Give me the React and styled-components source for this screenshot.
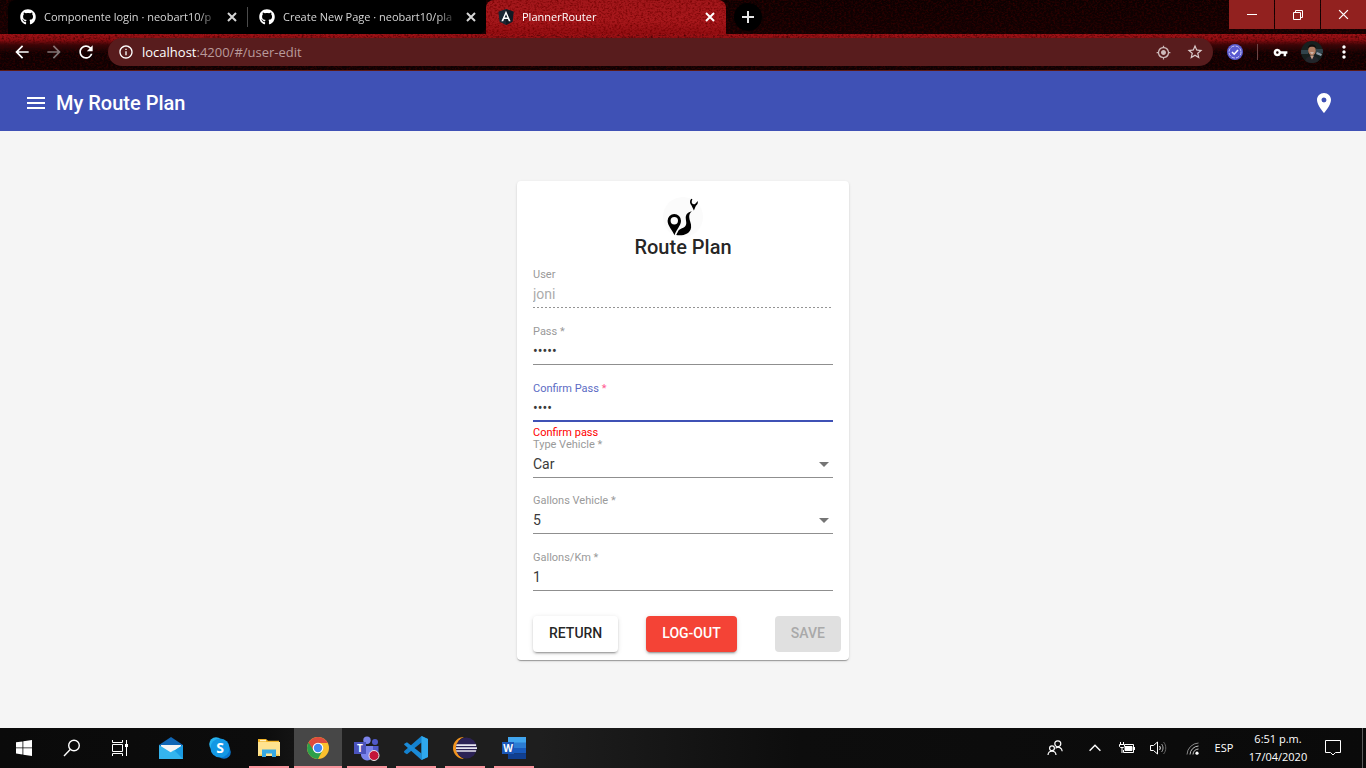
import React, { useState } from "react";
import styled, { createGlobalStyle, css } from "styled-components";
import {
  MdArrowBack, MdArrowForward, MdRefresh, MdInfoOutline, MdMyLocation,
  MdStarBorder, MdVpnKey, MdMoreVert, MdMenu, MdPlace,
} from "react-icons/md";
import { FaGithub } from "react-icons/fa";

const systemFont = `"Open Sans", "Noto Sans", sans-serif`;
const appFont = `Roboto, "Liberation Sans", sans-serif`;

const GlobalStyle = createGlobalStyle`
  *, *::before, *::after { box-sizing: border-box; }
  body { margin: 0; background: #f5f5f5; }
  button, input, select { font: inherit; color: inherit; margin: 0; }
  svg { display: block; flex: none; }
`;

const Screen = styled.div`
  min-height: 100vh;
  display: flex;
  flex-direction: column;
`;

const plainButton = css`
  border: 0;
  padding: 0;
  background: none;
  display: flex;
  align-items: center;
  justify-content: center;
  flex: none;
`;

/* ---------- browser window ---------- */

const BrowserFrame = styled.header`
  position: relative;
  isolation: isolate;
  font-family: ${systemFont};
  color: #fff;
  background: linear-gradient(#0c0101 0, #120102 34px, #a01216 34px, #8c0d11 40px, #3a0507 45px, #0e0102 53px, #0e0102 100%);
  border-bottom: 1px solid #5c1a15;
`;

const GrainSvg = styled.svg`
  position: absolute;
  inset: 0;
  width: 100%;
  height: 100%;
  z-index: -1;
`;

const TabStrip = styled.div`
  display: flex;
  height: 34px;
  padding-left: 8px;
`;

const Tab = styled.div`
  position: relative;
  isolation: isolate;
  overflow: hidden;
  flex: 0 1 ${(p) => (p.$active ? 240 : 239)}px;
  min-width: 0;
  display: flex;
  align-items: center;
  padding: 0 ${(p) => (p.$active ? 8 : 7)}px 0 12px;
  color: ${(p) => (p.$active ? "#fff" : "#d6d6d6")};
  background: ${(p) => (p.$active ? "linear-gradient(#a2171b, #a8181c 60%, #940e12)" : "#000")};
  border-radius: ${(p) => (p.$active ? "8px 8px 0 0" : p.$last ? "0 0 8px 0" : "8px 0 0 0")};
`;

const TabDivider = styled.span`
  width: 1px;
  height: 20px;
  margin: 7px -1px 0 0;
  background: #4b4b4b;
  z-index: 1;
`;

const TabTitle = styled.span`
  flex: 1;
  min-width: 0;
  margin: 0 6px 0 8px;
  overflow: hidden;
  white-space: nowrap;
  font-size: 11px;
  line-height: 16px;
  mask-image: linear-gradient(to right, #000 calc(100% - 20px), transparent);
`;

const TabClose = styled.button`
  ${plainButton}
  width: 16px;
  height: 16px;
`;

const NewTab = styled.button`
  ${plainButton}
  width: 28px;
  height: 28px;
  margin: 3px 0 0 8px;
  border-radius: 50%;
  background: #000;
`;

const WindowControls = styled.div`
  margin-left: auto;
  display: flex;
  gap: 1px;
  height: 29px;
`;

const WindowButton = styled.button`
  ${plainButton}
  width: 45px;
  background: #92211f;
`;

const Toolbar = styled.div`
  display: flex;
  align-items: center;
  height: 36px;
  padding: 0 6px;
`;

const ToolButton = styled.button`
  ${plainButton}
  width: 32px;
  height: 32px;
  opacity: ${(p) => (p.disabled ? 0.45 : 1)};
  color: #fff;
`;

const AddressBar = styled.div`
  flex: 1;
  min-width: 0;
  display: flex;
  align-items: center;
  height: 28px;
  margin: 0 6px;
  padding: 0 2px 0 10px;
  border-radius: 14px;
  background: #581c1d;
`;

const Address = styled.span`
  flex: 1;
  min-width: 0;
  padding-left: 8px;
  overflow: hidden;
  white-space: nowrap;
  font-size: 13px;
  line-height: 20px;
  color: #b89a9b;
  b { font-weight: 400; color: #fff; }
`;

const ToolDivider = styled.span`
  width: 1px;
  height: 16px;
  margin: 0 6px;
  background: #6b4545;
`;

/* ---------- application ---------- */

const AppBar = styled.div`
  display: flex;
  align-items: center;
  height: 60px;
  padding: 4px 30px 0 24px;
  background: #3f51b5;
  color: #fff;
  font-family: ${appFont};
`;

const AppTitle = styled.h1`
  flex: 1;
  margin: 0 0 0 8px;
  font-size: 20px;
  line-height: 32px;
  font-weight: 500;
`;

const IconButton = styled.button`
  ${plainButton}
  width: 24px;
  height: 24px;
`;

const Page = styled.main`
  flex: 1;
  padding: 50px 16px;
  background: #f5f5f5;
  font-family: ${appFont};
  color: rgba(0, 0, 0, 0.87);
`;

const Card = styled.form`
  width: 332px;
  max-width: 100%;
  margin: 0 auto;
  padding: 16px 16px 8px;
  border-radius: 4px;
  background: #fff;
  box-shadow: 0 2px 1px -1px rgba(0, 0, 0, 0.2), 0 1px 1px rgba(0, 0, 0, 0.14), 0 1px 3px rgba(0, 0, 0, 0.12);
`;

const Brand = styled.div`
  display: flex;
  flex-direction: column;
  align-items: center;
  margin-bottom: 10px;
`;

const BrandName = styled.h2`
  margin: 0;
  font-size: 20px;
  line-height: 20px;
  font-weight: 500;
`;

const FieldBox = styled.div`
  display: flex;
  flex-direction: column;
  padding-top: ${(p) => (p.$select ? 0 : 1)}px;
`;

const FieldLabel = styled.label`
  margin-bottom: 2px;
  font-size: 11px;
  line-height: 14px;
  color: ${(p) => (p.$focused ? "#5c6bc4" : "#9a9a9a")};
  span { color: ${(p) => (p.$focused ? "#ff5a92" : "inherit")}; }
`;

const Control = styled.div`
  position: relative;
  height: 24px;
  border-bottom: ${(p) => (p.$focused ? "2px solid #3f51b5" : "1px solid #8f8f8f")};
  ${(p) => p.$disabled && css`
    border-bottom: 0;
    background: repeating-linear-gradient(to right, #949494 0 2px, transparent 2px 4px) left bottom / 299px 1px no-repeat;
  `}
`;

const controlText = css`
  display: block;
  width: 100%;
  height: 20px;
  padding: 0;
  border: 0;
  outline: 0;
  border-radius: 0;
  background: none;
  font-size: 14px;
  line-height: 20px;
  color: #3a3a3a;
  opacity: 1;
`;

const TextInput = styled.input`
  ${controlText}
  &:disabled { color: #acacac; }
`;

const SelectInput = styled.select`
  ${controlText}
  appearance: none;
`;

const SelectArrow = styled.span`
  position: absolute;
  top: 8px;
  right: 4px;
  border: 5px solid transparent;
  border-top-color: #757575;
  border-bottom: 0;
  pointer-events: none;
`;

const Message = styled.div`
  height: 16px;
  padding-top: 4px;
  font-size: 11px;
  line-height: 14px;
  color: #ff0000;
`;

const Actions = styled.div`
  display: flex;
  margin: 9px -8px 0 0;
`;

const ActionButton = styled.button`
  height: 36px;
  margin-left: ${(p) => p.$space || "0"};
  padding: 0 16px 2px;
  border: 0;
  border-radius: 4px;
  font-size: 14px;
  line-height: 34px;
  font-weight: 500;
  color: ${(p) => (p.$tone === "warn" ? "#fff" : "rgba(0, 0, 0, 0.87)")};
  background: ${(p) => (p.$tone === "warn" ? "#f44336" : "#fff")};
  box-shadow: 0 3px 1px -2px rgba(0, 0, 0, 0.2), 0 2px 2px rgba(0, 0, 0, 0.14), 0 1px 5px rgba(0, 0, 0, 0.12);
  &:disabled {
    color: #a9a9a9;
    background: #e0e0e0;
    box-shadow: none;
  }
`;

/* ---------- desktop task bar ---------- */

const TaskBar = styled.footer`
  display: flex;
  height: 40px;
  background: linear-gradient(to right, #0a0a0a 0, #0c0c0c 260px, #1e1e1e 340px, #1e1e1e 540px, #0d0d0d 800px, #0a0a0a 100%);
  color: #fff;
  font-family: ${systemFont};
`;

const TaskGroup = styled.div`
  display: flex;
  gap: ${(p) => p.$gap || 0}px;
  margin-left: ${(p) => (p.$gap ? 3 : 0)}px;
`;

const TaskButton = styled.button`
  ${plainButton}
  position: relative;
  width: 48px;
  height: 40px;
  background: ${(p) => (p.$active ? "#474747" : "none")};
  &::after {
    content: "";
    display: ${(p) => (p.$open ? "block" : "none")};
    position: absolute;
    bottom: 0;
    left: ${(p) => (p.$active ? 0 : 4)}px;
    right: ${(p) => (p.$active ? 0 : 4)}px;
    height: 2px;
    background: #f9939c;
  }
`;

const Tray = styled.div`
  display: flex;
  margin-left: auto;
`;

const TrayButton = styled.button`
  ${plainButton}
  flex-direction: column;
  width: ${(p) => p.$width}px;
  height: 40px;
  font-size: 11px;
  line-height: 18px;
  white-space: nowrap;
`;

const ShowDesktop = styled.button`
  width: 4px;
  margin-left: 11px;
  padding: 0;
  border: 0;
  border-left: 1px solid #5b5b5b;
  background: none;
`;

/* ---------- drawings ---------- */

function Grain({ id, red, amount }) {
  return (
    <GrainSvg aria-hidden="true">
      <filter id={id} x="0" y="0" width="100%" height="100%" colorInterpolationFilters="sRGB">
        <feTurbulence type="fractalNoise" baseFrequency="0.45 0.6" numOctaves="3" seed="4" />
        <feColorMatrix values={`0 0 0 0 ${red} 0 0 0 0 0 0 0 0 0 0 ${amount} 0 0 0 ${-amount * 0.42}`} />
      </filter>
      <rect width="100%" height="100%" filter={`url(#${id})`} />
    </GrainSvg>
  );
}

const CloseGlyph = ({ size = 10, color = "currentColor", width = 2 }) => (
  <svg width={size} height={size} viewBox="0 0 10 10" stroke={color} strokeWidth={width}>
    <path d="M1 1l8 8M9 1l-8 8" />
  </svg>
);

const AngularMark = () => (
  <svg width="16" height="16" viewBox="0 0 16 16">
    <path d="M8 0l7.6 2.7-1.2 10L8 16l-6.4-3.3-1.2-10z" fill="#1b2733" />
    <path d="M8 0l7.6 2.7-1.2 10L8 16z" fill="#111a24" />
    <path d="M8 1.8L3.4 12.3h1.8l.9-2.4h3.8l.9 2.4h1.8zM8 5.2l1.4 3.3H6.6z" fill="#fff" fillRule="evenodd" />
  </svg>
);

const VerifiedMark = () => (
  <svg width="16" height="16" viewBox="0 0 16 16" fill="none">
    <circle cx="8" cy="8" r="8" fill="#5b5bd0" />
    <circle cx="8" cy="8" r="6" stroke="#c9c9f5" strokeDasharray="3.4 1.3" />
    <path d="M5 8l2.2 2.2L11 6" stroke="#fff" strokeWidth="1.6" />
  </svg>
);

const Avatar = () => (
  <svg width="22" height="22" viewBox="0 0 22 22">
    <clipPath id="face"><circle cx="11" cy="11" r="11" /></clipPath>
    <g clipPath="url(#face)">
      <rect width="22" height="22" fill="#17201f" />
      <path d="M0 9h7v4H0zM15 8h7v4h-7z" fill="#31434b" />
      <path d="M4 22c0-5 3-7 7-7s7 2 7 7z" fill="#22252b" />
      <path d="M16 11l5 2-1 2-5-2z" fill="#8d9aa8" />
      <ellipse cx="11" cy="9.500" rx="3.800" ry="5" fill="#b07c62" />
      <path d="M7 7.500c-.5-5.500 8.500-5.500 8 0-1-2.500-7-2.500-8 0z" fill="#100c0b" />
      <path d="M9.200 11.500h3.600c-.5 1.400-3.100 1.400-3.600 0z" fill="#eee" />
      <path d="M9 14.500h4l-2 4z" fill="#c9a08c" />
    </g>
  </svg>
);

const RouteLogo = () => (
  <svg width="40" height="40" viewBox="0 0 40 40" role="img" aria-label="Route">
    <circle cx="20" cy="20" r="20" fill="#fbfbfb" />
    <path d="M11.300 17a6.700 6.700 0 0 0-6.700 6.700c0 4.800 4 8.300 6.900 14.600C13.600 32 18 28.500 18 23.700A6.700 6.700 0 0 0 11.300 17zm0 3a3.700 3.700 0 1 1 0 7.400 3.700 3.700 0 0 1 0-7.400z" fillRule="evenodd" />
    <path d="M28.800 14.300c-4.200 1-6.400 3.400-6 7.500.3 3.200 1.200 5.200-.6 7.500-1.700 2.200-4.700 1.800-6.700 4.300L13.200 38c6.300 1.200 14-.8 14.900-7.500.5-4-1.900-7.400-1.900-10.500 0-2.300.8-4.200 2.600-5.700z" />
    <path d="M28.200 1.800c-2 2.200-1.300 4.800.3 6.800l2.400 5 2-4.800c1.700-1.300 2.100-2.700 1.900-4.800l-1.800 2c-.7 1-1.400 1.300-2.200 1.200-2-.1-2.700-2.200-1.400-5z" />
  </svg>
);

const WindowsMark = () => (
  <svg width="16" height="16" viewBox="0 0 16 16" fill="#fff">
    <path d="M0 2.300l6.500-.9v6.100H0zM7.300 1.300L16 0v7.500H7.300zM0 8.300h6.500v6.200L0 13.600zM7.300 8.300H16V16l-8.700-1.300z" />
  </svg>
);

const SearchGlyph = () => (
  <svg width="18" height="18" viewBox="0 0 18 18" fill="none" stroke="#fff" strokeWidth="1.400">
    <circle cx="11" cy="6.500" r="5.300" />
    <path d="M7.200 10.500L1 17" />
  </svg>
);

const TaskViewGlyph = () => (
  <svg width="16" height="16" viewBox="0 0 16 16" fill="none" stroke="#fff">
    <path d="M.5 0v2.500h10V0M.5 16v-2.500h10V16M.5 4.500h10v7H.5zM14.500 0v16" />
    <path d="M13 4h3v3h-3z" fill="#fff" stroke="none" />
  </svg>
);

const MailMark = () => (
  <svg width="24" height="22" viewBox="0 0 24 22">
    <path d="M0 8L12 0l12 8v4H0z" fill="#1066b5" />
    <path d="M2 8h20v9H2z" fill="#f4f4f4" />
    <path d="M0 8l12 7.500L24 8v14H0z" fill="#35b4ee" />
    <path d="M0 22l16-8.700L24 8v14z" fill="#1a9be3" />
    <path d="M0 22L15 13l9 9z" fill="#45c5f5" opacity=".6" />
  </svg>
);

const SkypeMark = () => (
  <svg width="22" height="22" viewBox="0 0 22 22">
    <circle cx="7" cy="7" r="6.800" fill="#27b4f0" />
    <circle cx="15" cy="15" r="6.800" fill="#0a78d0" />
    <circle cx="11" cy="11" r="9.600" fill="#1398e4" />
    <text x="11" y="16" textAnchor="middle" fill="#fff" fontFamily="Open Sans, sans-serif" fontWeight="700" fontSize="14">S</text>
  </svg>
);

const FolderMark = () => (
  <svg width="22" height="18" viewBox="0 0 22 18">
    <path d="M0 0h8l2 1.800h11V6H0z" fill="#f3b529" />
    <path d="M0 3h22v14H0z" fill="#ffe38f" />
    <path d="M2 1h6v1.300H2z" fill="#fff3c6" />
    <path d="M4 10.500h14V18h-4v-3.500H8V18H4z" fill="#37a9e3" />
    <path d="M1 15.500h3V17H1zM18 15.500h3V17h-3z" fill="#f6c948" />
  </svg>
);

const ChromeMark = () => (
  <svg width="22" height="22" viewBox="0 0 22 22">
    <circle cx="11" cy="11" r="11" fill="#fbc02d" />
    <path d="M11 11L1.500 5.500A11 11 0 0 0 11 22l4.500-8.500z" fill="#2c9f4b" />
    <path d="M11 11L1.500 5.500a11 11 0 0 1 19-.1V6H11z" fill="#dd4b3e" />
    <path d="M1.500 5.500L6.700 13.600 11 6z" fill="#dd4b3e" />
    <circle cx="11" cy="11" r="5.300" fill="#fff" />
    <circle cx="11" cy="11" r="4.200" fill="#4285f4" />
  </svg>
);

const TeamsMark = () => (
  <svg width="26" height="25" viewBox="0 0 26 25">
    <circle cx="21" cy="6" r="3" fill="#5059c9" />
    <circle cx="13" cy="4.200" r="3.700" fill="#7b83eb" />
    <path d="M16 10h8.500v7a5 5 0 0 1-8.500 3z" fill="#5059c9" />
    <path d="M7 10h12v8a6 6 0 0 1-12 1z" fill="#7b83eb" />
    <path d="M0 6h12v12H0z" fill="#4b53bc" />
    <text x="6" y="16" textAnchor="middle" fill="#fff" fontFamily="Open Sans, sans-serif" fontWeight="700" fontSize="10">T</text>
    <circle cx="20" cy="19.500" r="5" fill="#c4143a" stroke="#e9e9e9" />
  </svg>
);

const CodeMark = () => (
  <svg width="24" height="24" viewBox="0 0 24 24">
    <path d="M17.500 0L24 3v18l-6.500 3V6.500L3 18.200.4 16.700 0 15.300z" fill="#1482cf" />
    <path d="M17.500 24L0 8.600l.8-1.200L3 6.200 17.500 17.500z" fill="#1b8bd8" />
    <path d="M17.500 0L24 3v18l-6.500 3z" fill="#2fa9ee" />
  </svg>
);

const EclipseMark = () => (
  <svg width="24" height="22" viewBox="0 0 24 22">
    <path d="M11 0A11 11 0 0 0 11 22 12 12 0 0 1 11 0z" fill="#f2941f" />
    <circle cx="13.300" cy="11" r="10.500" fill="#2c2255" />
    <path d="M3.500 7.300h19.600v1.600H3.100zM3 10.200h21v1.700H3zM3.100 13.200h20.200l-.4 1.600H3.500z" fill="#e8e6f0" />
  </svg>
);

const WordMark = () => (
  <svg width="24" height="22" viewBox="0 0 24 22">
    <path d="M6 0h18v6H6z" fill="#41a5ee" />
    <path d="M6 5.500h18V11H6z" fill="#2b7cd3" />
    <path d="M6 11h18v5.500H6z" fill="#185abd" />
    <path d="M6 16.500h18V22H6z" fill="#103f91" />
    <path d="M0 5h12v12H0z" fill="#1b57b8" />
    <text x="6" y="15" textAnchor="middle" fill="#fff" fontFamily="Open Sans, sans-serif" fontWeight="700" fontSize="10">W</text>
  </svg>
);

const PeopleGlyph = () => (
  <svg width="16" height="16" viewBox="0 0 16 16" fill="none" stroke="#fff" strokeWidth="1.200">
    <circle cx="10.800" cy="3.800" r="3" />
    <circle cx="5" cy="8.300" r="2.400" />
    <path d="M8.500 8.300c3-2.300 6.500-.5 6.700 3M1 15c.3-5 7.700-5 8 0" />
  </svg>
);

const ChevronGlyph = () => (
  <svg width="12" height="8" viewBox="0 0 12 8" fill="none" stroke="#fff" strokeWidth="1.400">
    <path d="M.6 6.700L6 1.300l5.400 5.400" />
  </svg>
);

const BatteryGlyph = () => (
  <svg width="16" height="12" viewBox="0 0 16 12" fill="none" stroke="#fff">
    <path d="M6 2.500h8.500v8h-10V8M15.500 5v3" />
    <path d="M6 4.500h7v4H6z" fill="#fff" />
    <path d="M1.500 0v2M4.500 0v2M.5 2.500h5v2l-1 1h-3l-1-1zM3 6v5" />
  </svg>
);

const SpeakerGlyph = () => (
  <svg width="17" height="14" viewBox="0 0 17 14" fill="none" stroke="#fff">
    <path d="M.5 4.500h3L7.500 1v12l-4-3.500h-3zM9.500 5c1 1 1 3 0 4" />
    <path d="M11.500 3c2 2 2 6 0 8" stroke="#aaa" />
    <path d="M13.500 1c3 3 3 9 0 12" stroke="#666" />
  </svg>
);

const WifiGlyph = () => (
  <svg width="13" height="13" viewBox="0 0 13 13" fill="none" stroke="#c4c4c4">
    <path d="M1 12.500A12 12 0 0 1 12.500 1" stroke="#888" />
    <path d="M4 12.500A9 9 0 0 1 12.500 4M7 12.500A6 6 0 0 1 12.500 7" />
    <circle cx="11" cy="11.200" r="1.600" fill="#fff" stroke="none" />
  </svg>
);

const NoticeGlyph = () => (
  <svg width="16" height="16" viewBox="0 0 16 16" fill="none" stroke="#fff">
    <path d="M.5.500h15v12h-5L8 15l-2.500-2.500h-5z" />
  </svg>
);

/* ---------- screen ---------- */

function Field({ id, label, required, message, focused, disabled, options, ...input }) {
  return (
    <FieldBox $select={!!options}>
      <FieldLabel htmlFor={id} $focused={focused}>
        {label}{required && <span> *</span>}
      </FieldLabel>
      <Control $focused={focused} $disabled={disabled}>
        {options ? (
          <>
            <SelectInput id={id} {...input}>
              {options.map((o) => <option key={o}>{o}</option>)}
            </SelectInput>
            <SelectArrow />
          </>
        ) : (
          <TextInput id={id} disabled={disabled} {...input} />
        )}
      </Control>
      <Message>{message}</Message>
    </FieldBox>
  );
}

function Browser() {
  return (
    <BrowserFrame>
      <Grain id="frame-grain" red="0.24" amount="1.8" />
      <TabStrip>
        <Tab>
          <FaGithub size={16} color="#fff" />
          <TabTitle>Componente login · neobart10/p</TabTitle>
          <TabClose aria-label="Close tab"><CloseGlyph /></TabClose>
        </Tab>
        <TabDivider />
        <Tab $last>
          <FaGithub size={16} color="#fff" />
          <TabTitle>Create New Page · neobart10/pla</TabTitle>
          <TabClose aria-label="Close tab"><CloseGlyph /></TabClose>
        </Tab>
        <Tab $active>
          <Grain id="tab-grain" red="0.44" amount="2" />
          <AngularMark />
          <TabTitle>PlannerRouter</TabTitle>
          <TabClose aria-label="Close tab"><CloseGlyph /></TabClose>
        </Tab>
        <NewTab aria-label="New tab">
          <svg width="12" height="12" viewBox="0 0 12 12" stroke="#e6e6e6" strokeWidth="2"><path d="M6 0v12M0 6h12" /></svg>
        </NewTab>
        <WindowControls>
          <WindowButton aria-label="Minimize">
            <svg width="10" height="10" viewBox="0 0 10 10" stroke="#fff"><path d="M0 4.500h10" /></svg>
          </WindowButton>
          <WindowButton aria-label="Restore">
            <svg width="10" height="10" viewBox="0 0 10 10" stroke="#fff" fill="none"><path d="M.5 2.500h7v7h-7zM2.500 2.500v-2h7v7h-2" /></svg>
          </WindowButton>
          <WindowButton aria-label="Close"><CloseGlyph size={11} width={1.2} /></WindowButton>
        </WindowControls>
      </TabStrip>
      <Toolbar>
        <ToolButton aria-label="Back"><MdArrowBack size={20} /></ToolButton>
        <ToolButton aria-label="Forward" disabled><MdArrowForward size={20} /></ToolButton>
        <ToolButton aria-label="Reload"><MdRefresh size={20} /></ToolButton>
        <AddressBar>
          <MdInfoOutline size={16} />
          <Address><b>localhost</b>:4200/#/user-edit</Address>
          <ToolButton aria-label="Location"><MdMyLocation size={15} color="#cdb9b9" /></ToolButton>
          <ToolButton aria-label="Bookmark"><MdStarBorder size={18} color="#dccccc" /></ToolButton>
        </AddressBar>
        <ToolButton aria-label="Extension"><VerifiedMark /></ToolButton>
        <ToolDivider />
        <ToolButton aria-label="Passwords"><MdVpnKey size={15} /></ToolButton>
        <ToolButton aria-label="Profile"><Avatar /></ToolButton>
        <ToolButton aria-label="Menu"><MdMoreVert size={20} /></ToolButton>
      </Toolbar>
    </BrowserFrame>
  );
}

function UserForm() {
  const [values, setValues] = useState({
    user: "joni", pass: "12345", confirm: "1234", type: "Car", gallons: "5", km: "1",
  });
  const bind = (name) => ({
    id: name,
    value: values[name],
    onChange: (e) => setValues({ ...values, [name]: e.target.value }),
  });
  return (
    <Card onSubmit={(e) => e.preventDefault()}>
      <Brand>
        <RouteLogo />
        <BrandName>Route Plan</BrandName>
      </Brand>
      <Field label="User" disabled {...bind("user")} />
      <Field label="Pass" required type="password" {...bind("pass")} />
      <Field label="Confirm Pass" required type="password" focused message="Confirm pass" {...bind("confirm")} />
      <Field label="Type Vehicle" required options={["Car", "Motorcycle"]} {...bind("type")} />
      <Field label="Gallons Vehicle" required options={["5", "10"]} {...bind("gallons")} />
      <Field label="Gallons/Km" required {...bind("km")} />
      <Actions>
        <ActionButton type="button">RETURN</ActionButton>
        <ActionButton type="button" $tone="warn" $space="28px">LOG-OUT</ActionButton>
        <ActionButton type="submit" $space="auto" disabled>SAVE</ActionButton>
      </Actions>
    </Card>
  );
}

function Desktop() {
  return (
    <TaskBar>
      <TaskGroup>
        <TaskButton aria-label="Start"><WindowsMark /></TaskButton>
        <TaskButton aria-label="Search"><SearchGlyph /></TaskButton>
        <TaskButton aria-label="Task view"><TaskViewGlyph /></TaskButton>
      </TaskGroup>
      <TaskGroup $gap={1}>
        <TaskButton aria-label="Mail"><MailMark /></TaskButton>
        <TaskButton aria-label="Skype"><SkypeMark /></TaskButton>
        <TaskButton aria-label="Explorer" $open><FolderMark /></TaskButton>
        <TaskButton aria-label="Chrome" $open $active><ChromeMark /></TaskButton>
        <TaskButton aria-label="Teams" $open><TeamsMark /></TaskButton>
        <TaskButton aria-label="Code" $open><CodeMark /></TaskButton>
        <TaskButton aria-label="Eclipse" $open><EclipseMark /></TaskButton>
        <TaskButton aria-label="Word" $open><WordMark /></TaskButton>
      </TaskGroup>
      <Tray>
        <TrayButton $width={40} aria-label="People"><PeopleGlyph /></TrayButton>
        <TrayButton $width={40} aria-label="Hidden icons"><ChevronGlyph /></TrayButton>
        <TrayButton $width={24} aria-label="Battery"><BatteryGlyph /></TrayButton>
        <TrayButton $width={38} aria-label="Volume"><SpeakerGlyph /></TrayButton>
        <TrayButton $width={30} aria-label="Network"><WifiGlyph /></TrayButton>
        <TrayButton $width={34}>ESP</TrayButton>
        <TrayButton $width={74}><span>6:51 p.m.</span><span>17/04/2020</span></TrayButton>
        <TrayButton $width={36} aria-label="Notifications"><NoticeGlyph /></TrayButton>
        <ShowDesktop aria-label="Show desktop" />
      </Tray>
    </TaskBar>
  );
}

export default function App() {
  return (
    <Screen>
      <GlobalStyle />
      <Browser />
      <AppBar>
        <IconButton aria-label="Menu"><MdMenu size={24} /></IconButton>
        <AppTitle>My Route Plan</AppTitle>
        <IconButton aria-label="Map"><MdPlace size={24} /></IconButton>
      </AppBar>
      <Page>
        <UserForm />
      </Page>
      <Desktop />
    </Screen>
  );
}
